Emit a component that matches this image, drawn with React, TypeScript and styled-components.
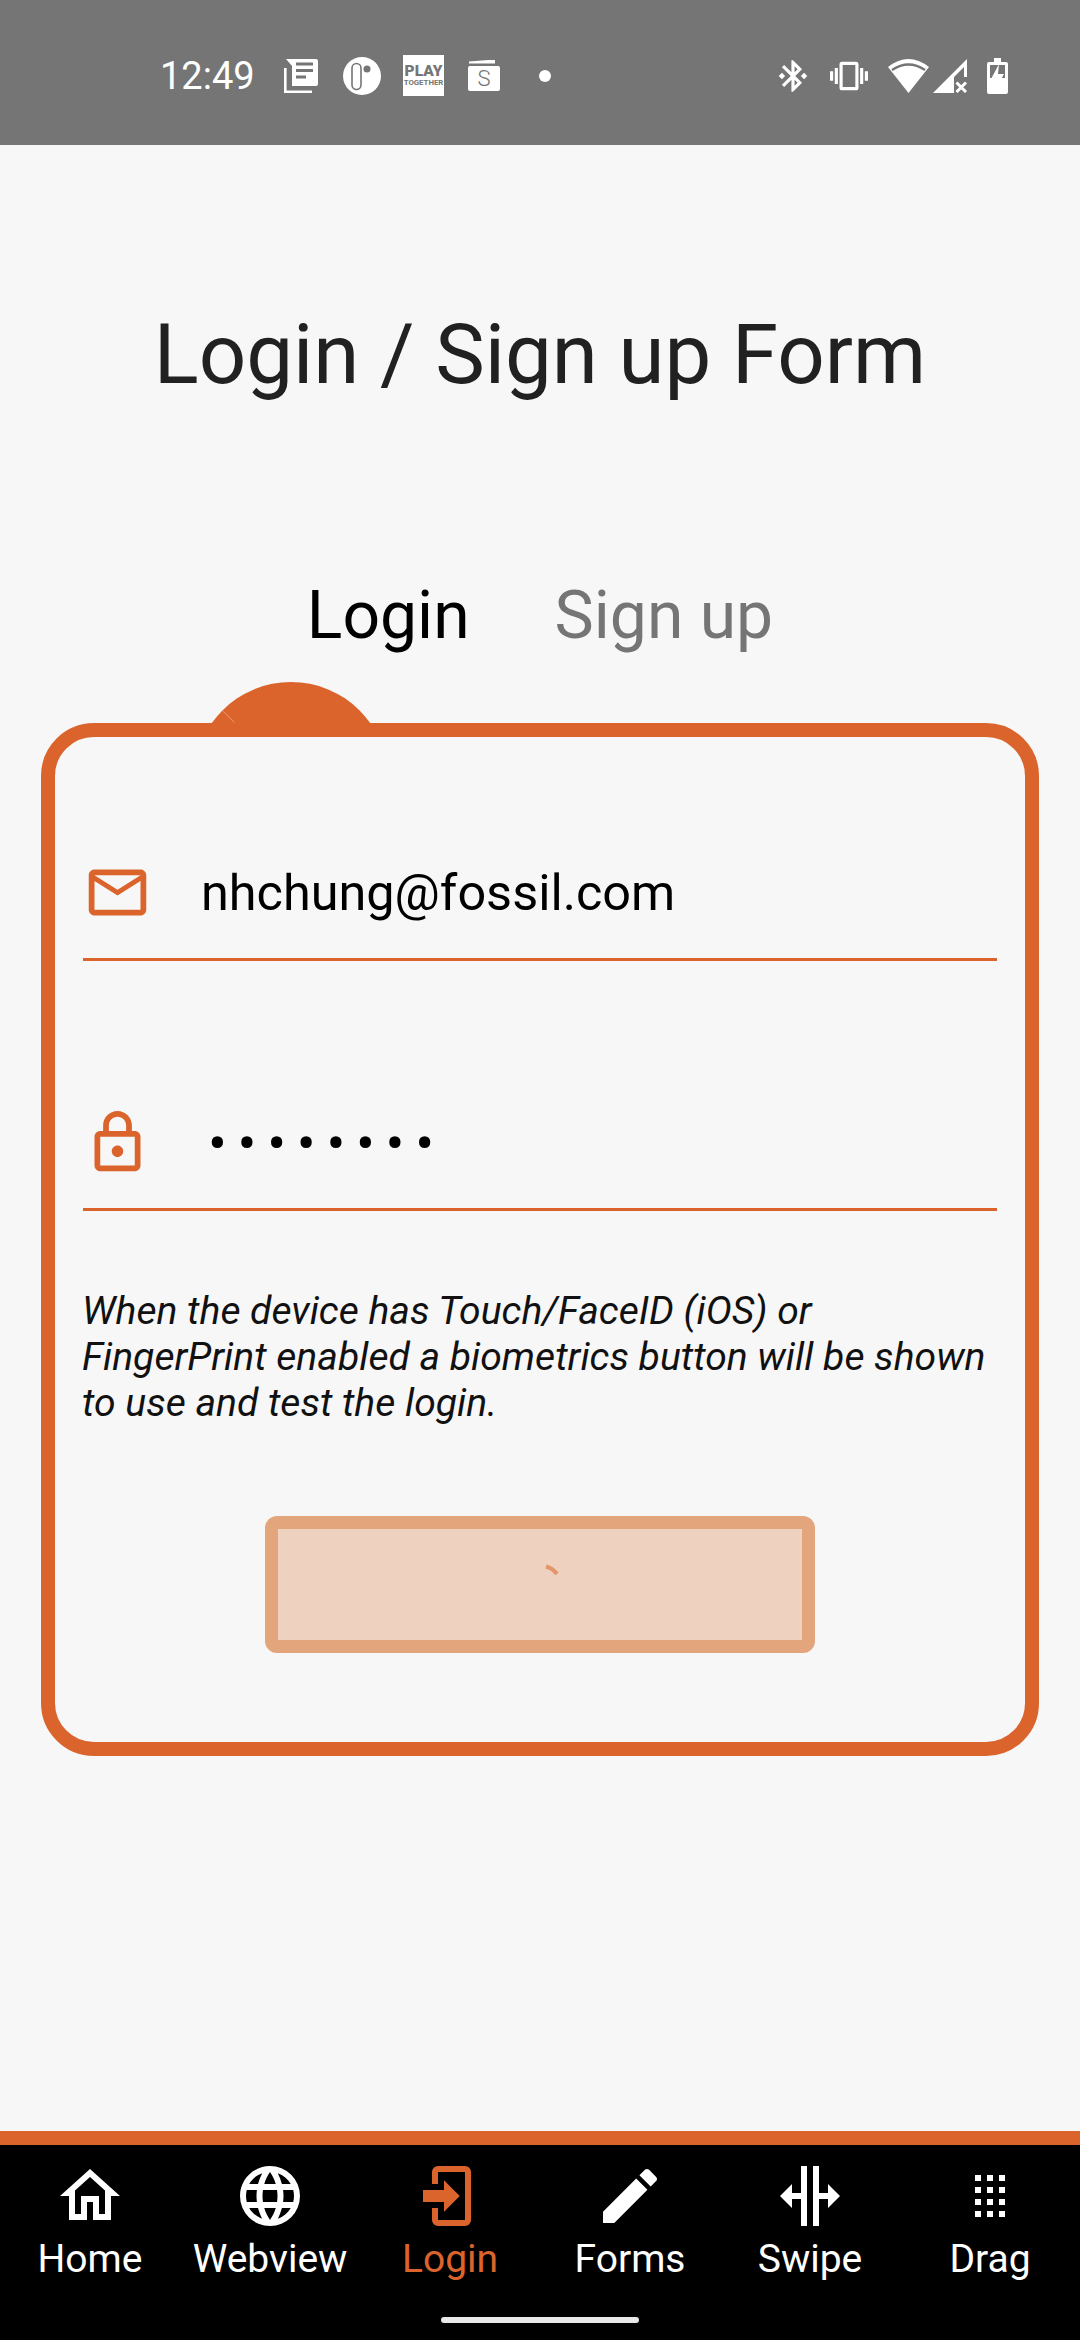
import styled, { createGlobalStyle } from 'styled-components';

const ORANGE = '#DB642C';

const GlobalStyle = createGlobalStyle`
  html, body {
    margin: 0;
    padding: 0;
    background: #f7f7f7;
    font-family: Roboto, 'Liberation Sans', sans-serif;
  }
`;

const Page = styled.div`
  width: 1080px;
  height: 2340px;
  display: flex;
  flex-direction: column;
  overflow: hidden;
`;

const StatusBar = styled.div`
  height: 145px;
  flex-shrink: 0;
  background: #757575;
  color: #fff;
  display: flex;
  align-items: center;
  padding: 6px 72px 0 160px;
  box-sizing: border-box;
`;

const Clock = styled.div`
  font-size: 38px;
  line-height: 48px;
  width: 124px;
`;

const StatusIcons = styled.div`
  display: flex;
  align-items: center;
`;

const StatusGlyph = styled.svg<{ $left?: number }>`
  flex-shrink: 0;
  margin-left: ${(p) => p.$left ?? 0}px;
`;

const PlayBadge = styled.div`
  width: 41px;
  height: 41px;
  margin-left: 22px;
  background: #fff;
  color: #757575;
  display: flex;
  flex-direction: column;
  align-items: center;
  justify-content: center;
`;

const PlayTop = styled.span`
  font-size: 15.5px;
  line-height: 14px;
  font-weight: 900;
`;

const PlayBottom = styled.span`
  font-size: 7.8px;
  line-height: 9px;
  font-weight: 700;
`;

const Wallet = styled.div`
  position: relative;
  width: 32px;
  height: 25px;
  margin: 5px 0 0 24px;
  border-radius: 2px;
  background: #fff;
  color: #757575;
  font-size: 22px;
  font-weight: 300;
  line-height: 25px;
  text-align: center;
  &::before {
    content: '';
    position: absolute;
    left: 1px;
    top: -6px;
    width: 26px;
    height: 4px;
    background: #fff;
    clip-path: polygon(0 100%, 0 50%, 100% 0, 100% 100%);
  }
`;

const NotifyDot = styled.div`
  width: 12px;
  height: 12px;
  margin-left: 39px;
  border-radius: 50%;
  background: #fff;
`;

const Spacer = styled.div`
  flex: 1;
`;

const Main = styled.div`
  flex: 1;
  display: flex;
  flex-direction: column;
  align-items: center;
`;

const Title = styled.h1`
  margin: 160px 0 0;
  font-size: 83.4px;
  line-height: 100px;
  font-weight: 400;
  color: #212121;
`;

const Tabs = styled.div`
  margin-top: 171px;
  display: flex;
  gap: 85px;
`;

const Tab = styled.div<{ $active?: boolean }>`
  font-size: 66px;
  line-height: 80px;
  color: ${(p) => (p.$active ? '#000' : '#757575')};
`;

const Card = styled.div`
  position: relative;
  margin-top: 67px;
  width: 998px;
  box-sizing: border-box;
  border: 14px solid ${ORANGE};
  border-radius: 53px;
  padding: 121px 28px 89px;
  display: flex;
  flex-direction: column;
`;

const Bump = styled.div`
  position: absolute;
  top: -55px;
  left: 157px;
  width: 158px;
  height: 41px;
  overflow: hidden;
  &::before {
    content: '';
    position: absolute;
    left: -18px;
    top: 0;
    width: 194px;
    height: 194px;
    border-radius: 50%;
    background: ${ORANGE};
  }
  &::after {
    content: '';
    position: absolute;
    left: 8px;
    top: 34px;
    width: 17px;
    height: 1px;
    background: rgba(255, 255, 255, 0.3);
    transform: rotate(45deg);
  }
`;

const Field = styled.div<{ $top?: number }>`
  display: flex;
  align-items: center;
  margin-top: ${(p) => p.$top ?? 0}px;
  padding-bottom: 31px;
  border-bottom: 3px solid ${ORANGE};
`;

const FieldIcon = styled.svg`
  width: 69px;
  height: 69px;
  flex-shrink: 0;
  fill: ${ORANGE};
`;

const FieldValue = styled.div`
  margin-left: 49px;
  font-size: 50.4px;
  line-height: 60px;
  color: #000;
`;

const SecretValue = styled.div`
  margin: 3px 0 0 56px;
  font-size: 56px;
  line-height: 60px;
  letter-spacing: 10.7px;
  color: #000;
`;

const Hint = styled.p`
  margin: 77px 0 0 -1px;
  font-size: 39.1px;
  line-height: 46px;
  font-style: italic;
  color: #111;
`;

const SubmitButton = styled.div`
  margin-top: 90px;
  align-self: center;
  width: 550px;
  height: 137px;
  box-sizing: border-box;
  border: 13px solid #e3a57b;
  border-radius: 12px;
  background: #efd1c0;
  display: flex;
  align-items: center;
  justify-content: center;
`;

const Spinner = styled.svg`
  width: 48px;
  height: 48px;
  fill: none;
  stroke: #e2966a;
  stroke-width: 4px;
`;

const BottomNav = styled.nav`
  flex-shrink: 0;
  background: #000;
  border-top: 14px solid ${ORANGE};
  padding-top: 15px;
  display: flex;
  flex-direction: column;
  align-items: center;
`;

const NavItems = styled.div`
  width: 100%;
  display: grid;
  grid-template-columns: repeat(6, 180px);
`;

const NavItem = styled.div<{ $active?: boolean }>`
  display: flex;
  flex-direction: column;
  align-items: center;
  color: ${(p) => (p.$active ? ORANGE : '#fff')};
`;

const NavIcon = styled.svg`
  width: 72px;
  height: 72px;
  fill: currentColor;
`;

const NavLabel = styled.div`
  margin-top: 4px;
  font-size: 39px;
  line-height: 46px;
`;

const HomeIndicator = styled.div`
  margin: 35px 0 17px;
  width: 198px;
  height: 6px;
  border-radius: 3px;
  background: #e8e8e8;
`;

const navItems = [
  {
    label: 'Home',
    d: 'M12 5.69l5 4.5V18h-2v-6H9v6H7v-7.81l5-4.5M12 3L2 12h3v8h6v-6h2v6h6v-8h3L12 3z',
  },
  {
    label: 'Webview',
    d: 'M16.36,14C16.44,13.34 16.5,12.68 16.5,12C16.5,11.32 16.44,10.66 16.36,10H19.74C19.9,10.64 20,11.31 20,12C20,12.69 19.9,13.36 19.74,14M14.59,19.56C15.19,18.45 15.65,17.25 15.97,16H18.92C17.96,17.65 16.43,18.93 14.59,19.56M14.34,14H9.66C9.56,13.34 9.5,12.68 9.5,12C9.5,11.32 9.56,10.65 9.66,10H14.34C14.43,10.65 14.5,11.32 14.5,12C14.5,12.68 14.43,13.34 14.34,14M12,19.96C11.17,18.76 10.5,17.43 10.09,16H13.91C13.5,17.43 12.83,18.76 12,19.96M8,8H5.08C6.03,6.34 7.57,5.06 9.4,4.44C8.8,5.55 8.35,6.75 8,8M5.08,16H8C8.35,17.25 8.8,18.45 9.4,19.56C7.57,18.93 6.03,17.65 5.08,16M4.26,14C4.1,13.36 4,12.69 4,12C4,11.31 4.1,10.64 4.26,10H7.64C7.56,10.66 7.5,11.32 7.5,12C7.5,12.68 7.56,13.34 7.64,14M12,4.03C12.83,5.23 13.5,6.57 13.91,8H10.09C10.5,6.57 11.17,5.23 12,4.03M18.92,8H15.97C15.65,6.75 15.19,5.55 14.59,4.44C16.43,5.07 17.96,6.34 18.92,8M12,2C6.47,2 2,6.5 2,12A10,10 0 0,0 12,22A10,10 0 0,0 22,12A10,10 0 0,0 12,2Z',
  },
  {
    label: 'Login',
    active: true,
    d: 'M10,17.25V14H3V10H10V6.75L15.25,12L10,17.25M8,2H17A2,2 0 0,1 19,4V20A2,2 0 0,1 17,22H8A2,2 0 0,1 6,20V16H8V20H17V4H8V8H6V4A2,2 0 0,1 8,2Z',
  },
  {
    label: 'Forms',
    d: 'M3 17.25V21h3.75L17.81 9.94l-3.75-3.75L3 17.25zM20.71 7.04c.39-.39.39-1.02 0-1.41l-2.34-2.34c-.39-.39-1.02-.39-1.41 0l-1.83 1.83 3.75 3.75 1.83-1.83z',
  },
  {
    label: 'Swipe',
    d: 'M18,16V13H15V22H13V2H15V11H18V8L22,12L18,16M2,12L6,16V13H9V22H11V2H9V11H6V8L2,12Z',
  },
  {
    label: 'Drag',
    d: 'M7,19V17H9V19H7M11,19V17H13V19H11M15,19V17H17V19H15M7,15V13H9V15H7M11,15V13H13V15H11M15,15V13H17V15H15M7,11V9H9V11H7M11,11V9H13V11H11M15,11V9H17V11H15M7,7V5H9V7H7M11,7V5H13V7H11M15,7V5H17V7H15Z',
  },
];

function App() {
  return (
    <Page>
      <GlobalStyle />
      <StatusBar>
        <Clock>12:49</Clock>
        <StatusIcons>
          <StatusGlyph width="34" height="34" viewBox="0 0 34 34">
            <path d="M2 0H32Q34 0 34 2V25Q34 27 32 27H8V7Z" fill="#fff" />
            <path d="M12 5h17M12 11.500h17M12 18h10" stroke="#757575" strokeWidth="3" />
            <path d="M1.300 9V32.700H28" stroke="#fff" strokeWidth="2.600" fill="none" />
          </StatusGlyph>
          <StatusGlyph width="38" height="38" viewBox="0 0 38 38" $left={25}>
            <circle cx="19" cy="19" r="19" fill="#fff" />
            <circle cx="24" cy="12" r="3.500" fill="#757575" />
            <rect x="9" y="6.500" width="9" height="26" rx="4.500" fill="#fff" stroke="#757575" strokeWidth="1.600" />
          </StatusGlyph>
          <PlayBadge>
            <PlayTop>PLAY</PlayTop>
            <PlayBottom>TOGETHER</PlayBottom>
          </PlayBadge>
          <Wallet>S</Wallet>
          <NotifyDot />
        </StatusIcons>
        <Spacer />
        <StatusIcons>
          <StatusGlyph width="38" height="38" viewBox="0 0 24 24" fill="#fff">
            <path d="M7 12l-2-2-2 2 2 2 2-2zm10.710-4.290L12 2h-1v7.590L6.410 5 5 6.410 10.590 12 5 17.590 6.410 19 11 14.410V22h1l5.710-5.710-4.300-4.290 4.300-4.290zM13 5.830l1.880 1.880L13 9.590V5.830zm1.880 10.460L13 18.170v-3.760l1.880 1.880zM19 10l-2 2 2 2 2-2-2-2z" />
          </StatusGlyph>
          <StatusGlyph width="38" height="38" viewBox="0 0 24 24" fill="#fff" $left={18}>
            <path d="M0 15h2V9H0v6zm3 2h2V7H3v10zm19-8v6h2V9h-2zm-3 8h2V7h-2v10zM16.500 3h-9C6.670 3 6 3.670 6 4.500v15c0 .83.67 1.500 1.500 1.500h9c.83 0 1.500-.67 1.500-1.500v-15c0-.83-.67-1.500-1.500-1.500zM16 19H8V5h8v14z" />
          </StatusGlyph>
          <StatusGlyph width="41" height="34" viewBox="0 0 41 34" $left={20}>
            <path d="M0 8Q20.500 -8 41 8L20.500 34Z" fill="#fff" />
            <path d="M4 11Q20.500 0 37 11" stroke="#757575" strokeWidth="2.500" fill="none" />
          </StatusGlyph>
          <StatusGlyph width="34" height="34" viewBox="0 0 34 34" $left={4}>
            <path d="M0 34L34 0V18H31V8L21 18V34Z" fill="#fff" />
            <path d="M23.500 23.500L33 33M33 23.500L23.500 33" stroke="#fff" strokeWidth="3" />
          </StatusGlyph>
          <StatusGlyph width="21" height="36" viewBox="0 0 21 36" $left={20}>
            <path d="M7 0H14V4H19Q21 4 21 6V34Q21 36 19 36H2Q0 36 0 34V6Q0 4 2 4H7Z" fill="#fff" />
            <rect x="3" y="7" width="15" height="13" fill="#757575" />
            <path d="M12 6L4 21H9L8 33L17 16H11Z" fill="#fff" />
          </StatusGlyph>
        </StatusIcons>
      </StatusBar>

      <Main>
        <Title>Login / Sign up Form</Title>
        <Tabs>
          <Tab $active>Login</Tab>
          <Tab>Sign up</Tab>
        </Tabs>
        <Card>
          <Bump />
          <Field>
            <FieldIcon viewBox="0 0 24 24">
              <path d="M20 4H4c-1.100 0-2 .9-2 2v12c0 1.100.9 2 2 2h16c1.100 0 2-.9 2-2V6c0-1.100-.9-2-2-2zm0 14H4V8l8 5 8-5v10zm-8-7L4 6h16l-8 5z" />
            </FieldIcon>
            <FieldValue>nhchung@fossil.com</FieldValue>
          </Field>
          <Field $top={147}>
            <FieldIcon viewBox="0 0 24 24">
              <path d="M18 8h-1V6c0-2.760-2.240-5-5-5S7 3.240 7 6v2H6c-1.100 0-2 .9-2 2v10c0 1.100.9 2 2 2h12c1.100 0 2-.9 2-2V10c0-1.100-.9-2-2-2zM9 6c0-1.660 1.340-3 3-3s3 1.340 3 3v2H9V6zm9 14H6V10h12v10zm-6-3c1.100 0 2-.9 2-2s-.9-2-2-2-2 .9-2 2 .9 2 2 2z" />
            </FieldIcon>
            <SecretValue>••••••••</SecretValue>
          </Field>
          <Hint>
            When the device has Touch/FaceID (iOS) or
            <br />
            FingerPrint enabled a biometrics button will be shown
            <br />
            to use and test the login.
          </Hint>
          <SubmitButton>
            <Spinner viewBox="0 0 48 48">
              <path d="M30 5.500A20 20 0 0 1 41 13" />
            </Spinner>
          </SubmitButton>
        </Card>
      </Main>

      <BottomNav>
        <NavItems>
          {navItems.map((item) => (
            <NavItem key={item.label} $active={item.active}>
              <NavIcon viewBox="0 0 24 24">
                <path d={item.d} />
              </NavIcon>
              <NavLabel>{item.label}</NavLabel>
            </NavItem>
          ))}
        </NavItems>
        <HomeIndicator />
      </BottomNav>
    </Page>
  );
}

export default App;
